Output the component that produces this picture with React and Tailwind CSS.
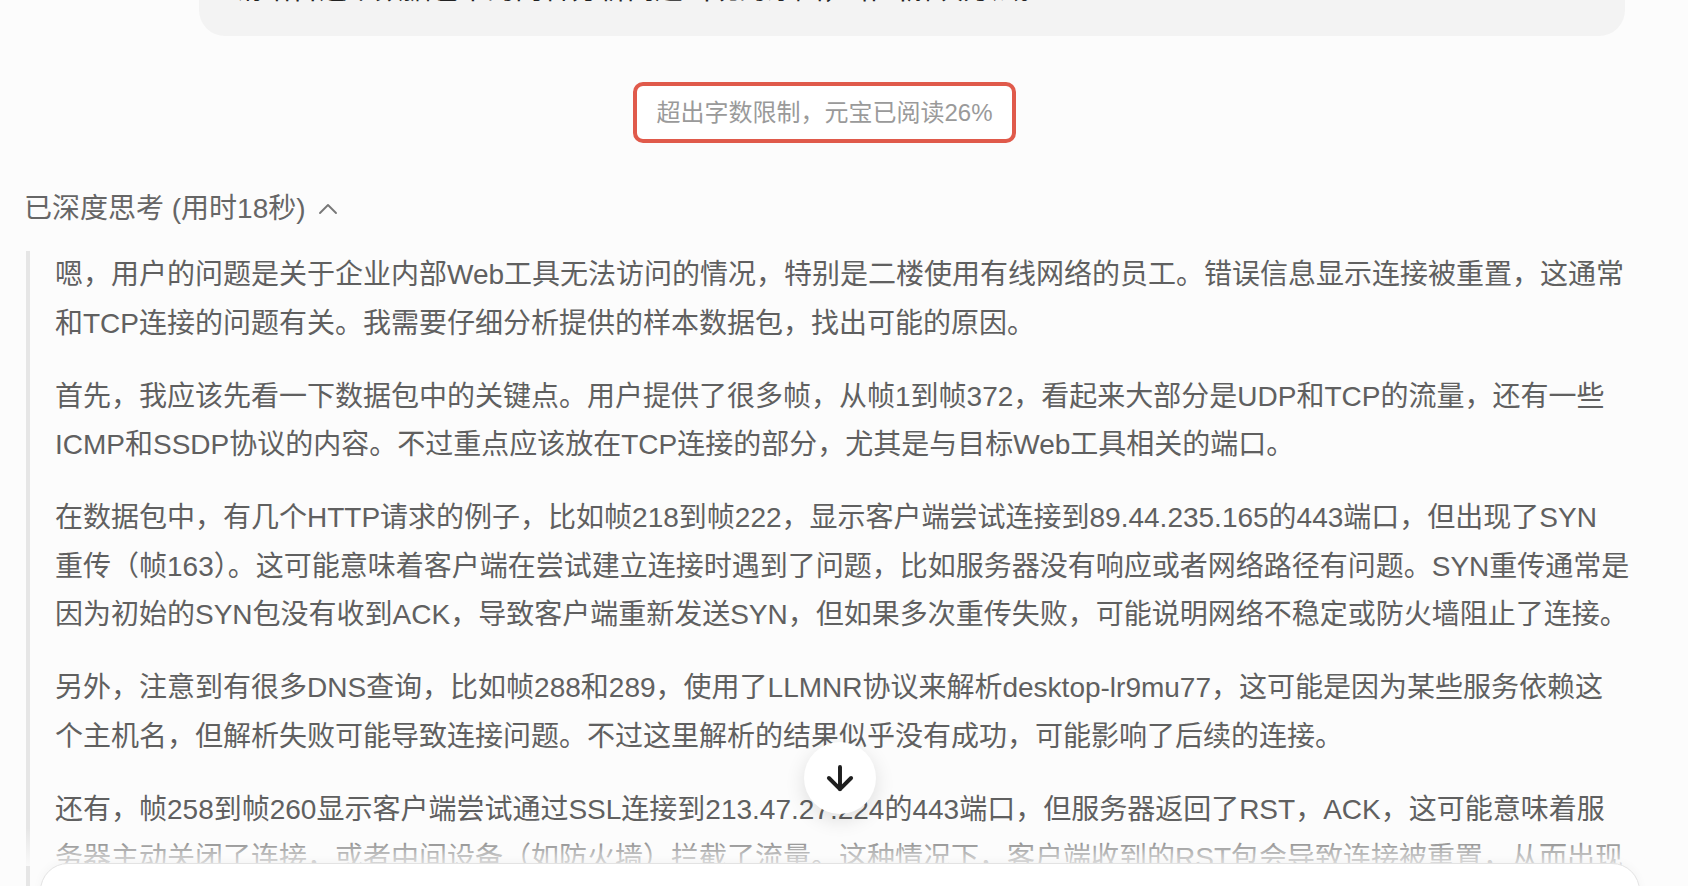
import React from 'react';
import { ArrowDown, ChevronUp } from 'lucide-react';

const font = { fontFamily: '"Liberation Sans", "Noto Sans CJK SC", sans-serif' };

const paragraphs = [
  [
    '嗯，用户的问题是关于企业内部Web工具无法访问的情况，特别是二楼使用有线网络的员工。错误信息显示连接被重置，这通常',
    '和TCP连接的问题有关。我需要仔细分析提供的样本数据包，找出可能的原因。',
  ],
  [
    '首先，我应该先看一下数据包中的关键点。用户提供了很多帧，从帧1到帧372，看起来大部分是UDP和TCP的流量，还有一些',
    'ICMP和SSDP协议的内容。不过重点应该放在TCP连接的部分，尤其是与目标Web工具相关的端口。',
  ],
  [
    '在数据包中，有几个HTTP请求的例子，比如帧218到帧222，显示客户端尝试连接到89.44.235.165的443端口，但出现了SYN',
    '重传（帧163）。这可能意味着客户端在尝试建立连接时遇到了问题，比如服务器没有响应或者网络路径有问题。SYN重传通常是',
    '因为初始的SYN包没有收到ACK，导致客户端重新发送SYN，但如果多次重传失败，可能说明网络不稳定或防火墙阻止了连接。',
  ],
  [
    '另外，注意到有很多DNS查询，比如帧288和289，使用了LLMNR协议来解析desktop-lr9mu77，这可能是因为某些服务依赖这',
    '个主机名，但解析失败可能导致连接问题。不过这里解析的结果似乎没有成功，可能影响了后续的连接。',
  ],
  [
    '还有，帧258到帧260显示客户端尝试通过SSL连接到213.47.27.224的443端口，但服务器返回了RST，ACK，这可能意味着服',
    '务器主动关闭了连接，或者中间设备（如防火墙）拦截了流量。这种情况下，客户端收到的RST包会导致连接被重置，从而出现',
  ],
];

export default function App() {
  return (
    <div className="relative h-[886px] w-full overflow-hidden bg-[#fcfcfc]" style={font}>
      <div className="flex flex-col pl-[24px] pr-[63px]">
        {/* user message, scrolled mostly out of view */}
        <div className="ml-[175px] mt-[-55px] rounded-[26px] bg-[#f3f3f3] pl-[36px] pr-6 pt-[21px] pb-[22px]">
          <p className="whitespace-nowrap text-[28px] leading-[48px] text-[#222]">
            请结合这个数据包中的内容分析问题出现的原因，给出解决方法。
          </p>
        </div>

        <div className="mt-[46px] flex justify-center">
          <div className="flex h-[61px] items-center rounded-[10px] border-4 border-[#e05a4b] bg-white px-[19px]">
            <span className="whitespace-nowrap text-[24px] leading-[32px] text-[#9a9a9a]">
              超出字数限制，元宝已阅读26%
            </span>
          </div>
        </div>

        <div className="mt-[46px] flex h-[40px] items-center gap-[6px] text-[#666]">
          <span className="whitespace-nowrap text-[28px] leading-[40px]">已深度思考 (用时18秒)</span>
          <ChevronUp size={32} strokeWidth={1.4} className="text-[#777]" />
        </div>

        <div className="ml-[2px] mt-[22px] border-l-[4px] border-[#e6e6e6] pl-[25px]">
          {paragraphs.map((lines, i) => (
            <p
              key={i}
              className="mb-[24.5px] whitespace-nowrap text-[28px] leading-[48.5px] text-[#606060]"
            >
              {lines.map((l, j) => (
                <React.Fragment key={j}>
                  {l}
                  {j < lines.length - 1 && <br />}
                </React.Fragment>
              ))}
            </p>
          ))}
        </div>
      </div>

      {/* fade over the last line */}
      <div className="pointer-events-none absolute left-0 right-0 top-[828px] h-[38px] bg-gradient-to-b from-[#fcfcfc00] to-[#fcfcfcdd]" />

      {/* scroll to bottom button */}
      <button className="absolute left-[804px] top-[742px] flex h-[72px] w-[72px] items-center justify-center rounded-full bg-white shadow-[0_6px_20px_rgba(0,0,0,0.12)]">
        <ArrowDown size={38} strokeWidth={2.5} className="text-[#1f1f1f]" />
      </button>

      {/* composer */}
      <div className="absolute left-[40px] right-[48px] top-[863px] h-[120px] rounded-[28px] border border-[#e3e3e3] bg-white shadow-[0_-2px_10px_rgba(0,0,0,0.03)]" />
    </div>
  );
}
